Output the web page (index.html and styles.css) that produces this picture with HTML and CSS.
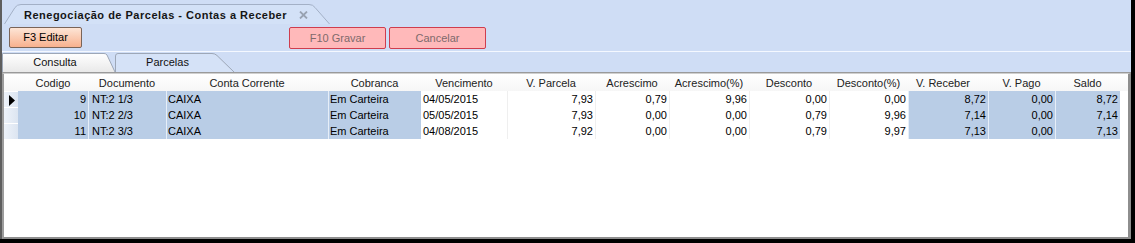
FILE: index.html
```html
<!DOCTYPE html>
<html lang="pt">
<head>
<meta charset="utf-8">
<title>Renegociação de Parcelas</title>
<link rel="stylesheet" href="styles.css">
</head>
<body>
<div class="window">
  <div class="titlebar">
    <div class="doc-tab">
      <svg class="tab-shape" viewBox="0 0 326 20" preserveAspectRatio="none"><path d="M0.5,20 L11,3.5 Q13,0.5 17,0.5 L305,0.5 Q309,0.5 311,3.5 L325.5,20" fill="#d3e1f7" stroke="#a3b0c6" stroke-width="1"/></svg>
      <span class="doc-title">Renegociação de Parcelas - Contas a Receber</span>
      <svg class="doc-close" width="9" height="8" viewBox="0 0 9 8"><path d="M1,0.5 L8,7.5 M8,0.5 L1,7.5" stroke="#98a2b2" stroke-width="1.8"/></svg>
    </div>
  </div>
  <div class="toolbar">
    <button class="btn btn-edit">F3 Editar</button>
    <div class="btn-group">
      <button class="btn btn-off">F10 Gravar</button>
      <button class="btn btn-off">Cancelar</button>
    </div>
  </div>
  <div class="sep"></div>
  <div class="tabstrip">
    <div class="page-tab tab-consulta">
      <svg class="tab-shape" viewBox="0 0 113 19" preserveAspectRatio="none"><defs><linearGradient id="gw" x1="0" y1="0" x2="0" y2="1"><stop offset="0" stop-color="#ffffff"/><stop offset="1" stop-color="#e9e9e9"/></linearGradient></defs><path d="M0.5,19 L0.5,0.5 L102,0.5 Q104,0.5 105,2 L113,19" fill="url(#gw)" stroke="#9da7b7" stroke-width="1"/></svg>
      <span class="tab-label">Consulta</span>
    </div>
    <div class="page-tab tab-parcelas">
      <svg class="tab-shape" viewBox="0 0 120 19" preserveAspectRatio="none"><path d="M0.5,19 L0.5,3 Q0.5,0.5 3,0.5 L97,0.5 Q100,0.5 102,2.5 L119,19" fill="#d5e2f7" stroke="#9da7b7" stroke-width="1"/></svg>
      <span class="tab-label">Parcelas</span>
    </div>
  </div>
  <div class="grid">
    <div class="row head">
      <div class="c ind-h"></div>
      <div class="c">Codigo</div>
      <div class="c">Documento</div>
      <div class="c">Conta Corrente</div>
      <div class="c">Cobranca</div>
      <div class="c">Vencimento</div>
      <div class="c">V. Parcela</div>
      <div class="c">Acrescimo</div>
      <div class="c">Acrescimo(%)</div>
      <div class="c">Desconto</div>
      <div class="c">Desconto(%)</div>
      <div class="c shift">V. Receber</div>
      <div class="c">V. Pago</div>
      <div class="c">Saldo</div>
      <div class="c"></div>
    </div>
    <div class="row data">
      <div class="c ind"><svg width="6" height="11" viewBox="0 0 6 11"><path d="M0,0 L6,5.5 L0,11 Z" fill="#000"/></svg></div>
      <div class="c b r first">9</div>
      <div class="c b l doc">NT:2 1/3</div>
      <div class="c b l">CAIXA</div>
      <div class="c b l">Em Carteira</div>
      <div class="c w l dt">04/05/2015</div>
      <div class="c w r">7,93</div>
      <div class="c w r">0,79</div>
      <div class="c w r">9,96</div>
      <div class="c w r">0,00</div>
      <div class="c w r">0,00</div>
      <div class="c b r">8,72</div>
      <div class="c b r">0,00</div>
      <div class="c b r">8,72</div>
      <div class="c"></div>
    </div>
    <div class="row data">
      <div class="c ind"></div>
      <div class="c b r first">10</div>
      <div class="c b l doc">NT:2 2/3</div>
      <div class="c b l">CAIXA</div>
      <div class="c b l">Em Carteira</div>
      <div class="c w l dt">05/05/2015</div>
      <div class="c w r">7,93</div>
      <div class="c w r">0,00</div>
      <div class="c w r">0,00</div>
      <div class="c w r">0,79</div>
      <div class="c w r">9,96</div>
      <div class="c b r">7,14</div>
      <div class="c b r">0,00</div>
      <div class="c b r">7,14</div>
      <div class="c"></div>
    </div>
    <div class="row data">
      <div class="c ind"></div>
      <div class="c b r first">11</div>
      <div class="c b l doc">NT:2 3/3</div>
      <div class="c b l">CAIXA</div>
      <div class="c b l">Em Carteira</div>
      <div class="c w l dt">04/08/2015</div>
      <div class="c w r">7,92</div>
      <div class="c w r">0,00</div>
      <div class="c w r">0,00</div>
      <div class="c w r">0,79</div>
      <div class="c w r">9,97</div>
      <div class="c b r">7,13</div>
      <div class="c b r">0,00</div>
      <div class="c b r">7,13</div>
      <div class="c"></div>
    </div>
  </div>
</div>
</body>
</html>
```
FILE: styles.css
```css
* { box-sizing: border-box; }
html, body { margin: 0; padding: 0; }
body {
  background: #000;
  width: 1135px;
  height: 243px;
  overflow: hidden;
  font-family: "Liberation Sans", Arial, sans-serif;
  font-size: 11px;
  color: #000;
}
.window {
  width: 1131px;
  height: 239px;
  background: #cfddf5;
  border-left: 2px solid #5e5e5e;
  display: flex;
  flex-direction: column;
}
.titlebar {
  height: 24px;
  display: flex;
  align-items: flex-end;
  padding-left: 2px;
  flex: none;
}
.doc-tab {
  position: relative;
  width: 326px;
  height: 20px;
  display: flex;
  align-items: center;
  padding-left: 20px;
  padding-top: 1px;
}
.tab-shape {
  position: absolute;
  left: 0;
  top: 0;
  width: 100%;
  height: 100%;
}
.doc-title {
  position: relative;
  font-weight: bold;
  color: #151515;
  line-height: 14px;
  letter-spacing: 0.5px;
}
.doc-close {
  position: relative;
  margin-left: 12px;
  margin-top: 1px;
}
.toolbar {
  height: 27px;
  flex: none;
  display: flex;
  align-items: flex-start;
  padding-top: 3px;
  padding-left: 7px;
}
.btn {
  font-family: "Liberation Sans", Arial, sans-serif;
  font-size: 11px;
  height: 21px;
  line-height: 19px;
  padding: 0;
  text-align: center;
  border-radius: 2px;
}
.btn-edit {
  width: 73px;
  border: 1px solid #7a6458;
  background: linear-gradient(#fde5d6, #f8b18e);
  color: #000;
}
.btn-group {
  display: flex;
  gap: 3px;
  margin-left: 207px;
}
.btn-off {
  width: 97px;
  height: 22px;
  border: 1px solid #cf3d4e;
  background: #ffb9ba;
  color: #7e6a6c;
}
.sep {
  height: 1px;
  background: #f4f8ff;
  flex: none;
}
.tabstrip {
  height: 21px;
  flex: none;
  display: flex;
  align-items: flex-end;
  border-bottom: 1px solid #9a9a9a;
}
.page-tab {
  position: relative;
  height: 19px;
  line-height: 19px;
}
.tab-label { position: relative; display: block; text-align: center; color: #111; }
.tab-consulta { width: 113px; }
.tab-consulta .tab-label { width: 106px; }
.tab-parcelas { width: 120px; }
.tab-parcelas .tab-label { width: 105px; }
.grid {
  flex: 1;
  background: #fff;
  border-left: 2px solid #9c9c9c;
  border-right: 3px solid #8e8e8e;
  border-bottom: 2px solid #8e8e8e;
  border-top: 1px solid #cfcfcf;
}
.row {
  display: grid;
  grid-template-columns: 14px 70px 78px 162px 93px 86px 88px 74px 80px 80px 79px 80px 67px 65px 1fr;
}
.head {
  height: 17px;
  background: linear-gradient(#ffffff, #f6f6f6);
}
.head .c {
  text-align: center;
  padding-top: 2px;
  line-height: 14px;
  color: #222;
  white-space: nowrap;
}
.head .shift { padding-right: 10px; }
.data { height: 16px; }
.data .c {
  line-height: 15px;
  padding-top: 1px;
  white-space: nowrap;
  overflow: hidden;
}
.ind {
  background: linear-gradient(90deg, #eef3fa, #dce5f1);
  border-top: 1px solid #fff;
  padding-left: 5px;
  display: flex;
  align-items: center;
}
.ind svg { margin-top: 1px; }
.b { background: #b9cde6; border-left: 1px solid #e6eef8; }
.b.first { border-left: none; }
.w { background: #fff; border-left: 1px solid #efefef; }
.dt { border-left: none; }
.r { text-align: right; padding-right: 2px; }
.l { text-align: left; padding-left: 1px; }
.doc { padding-left: 3px; }
.dt { padding-left: 2px; }
```
